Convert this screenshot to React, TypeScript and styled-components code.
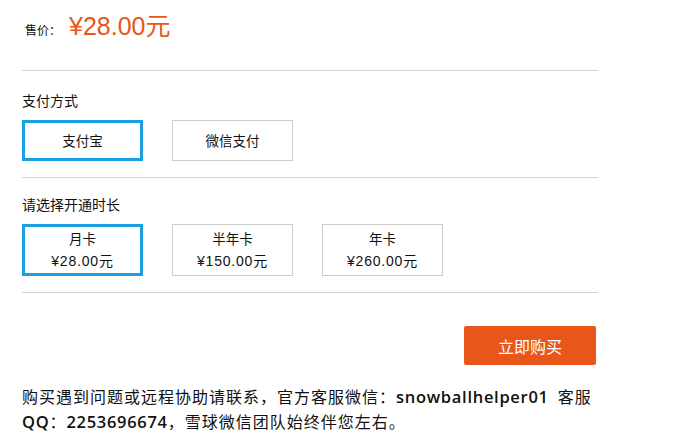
import * as React from "react";
import styled, { createGlobalStyle, css } from "styled-components";

const orange = "#e8561a";
const blue = "#1a9fe0";
const line = "#d4d4d4";

const Global = createGlobalStyle`
  html, body {
    margin: 0;
    padding: 0;
    background: #fff;
  }
  body {
    font-family: "Noto Sans CJK SC", "Liberation Sans", sans-serif;
    color: #111;
  }
`;

const Page = styled.div`
  width: 576px;
  padding: 0 0 0 22px;
`;

const PriceRow = styled.div`
  display: flex;
  align-items: baseline;
  padding: 6px 0 0 3px;
  height: 70px;
  box-sizing: border-box;
`;

const PriceLabel = styled.span`
  font-size: 12px;
`;

const PriceValue = styled.span`
  font-family: "Liberation Sans", "Noto Sans CJK SC", sans-serif;
  font-size: 25px;
  color: ${orange};
  margin-left: 8px;
`;

const Divider = styled.div`
  height: 1px;
  background: ${line};
`;

const Section = styled.div<{ top: number }>`
  padding: ${(p) => p.top}px 0 16px;
`;

const Title = styled.div`
  font-size: 14px;
  line-height: 20px;
  margin-bottom: 10px;
`;

const Options = styled.div`
  display: flex;
`;

const Option = styled.div<{ active?: boolean; tall?: boolean }>`
  box-sizing: border-box;
  width: 121px;
  height: ${(p) => (p.tall ? 52 : 41)}px;
  margin-right: 29px;
  border: 1px solid #cccccc;
  display: flex;
  flex-direction: column;
  align-items: center;
  justify-content: center;
  font-size: 13.5px;
  line-height: 23px;
  background: #fff;
  ${(p) =>
    p.active &&
    css`
      border: 3px solid ${blue};
    `}
`;

const Amount = styled.span`
  font-family: "Liberation Sans", "Noto Sans CJK SC", sans-serif;
  font-size: 14px;
  letter-spacing: 0.8px;
`;

const Actions = styled.div`
  display: flex;
  justify-content: flex-end;
  padding: 33px 2px 0 0;
`;

const BuyButton = styled.button`
  width: 132px;
  height: 39px;
  border: none;
  border-radius: 2px;
  background: ${orange};
  color: #fff;
  font-family: "Noto Sans CJK SC", sans-serif;
  font-size: 16px;
  cursor: pointer;
`;

const Notice = styled.p`
  margin: 19px 0 0;
  font-size: 16px;
  line-height: 24px;
  letter-spacing: 1px;
  color: #111;
`;

const Latin = styled.span`
  font-family: "Open Sans", "Noto Sans CJK SC", sans-serif;
  font-weight: 600;
  font-size: 16.5px;
  letter-spacing: 0.7px;
`;

const durations = [
  { name: "月卡", price: "¥28.00元" },
  { name: "半年卡", price: "¥150.00元" },
  { name: "年卡", price: "¥260.00元" },
];

export default function App() {
  const [pay, setPay] = React.useState(0);
  const [plan, setPlan] = React.useState(0);

  return (
    <Page>
      <Global />
      <PriceRow>
        <PriceLabel>售价：</PriceLabel>
        <PriceValue>¥28.00元</PriceValue>
      </PriceRow>
      <Divider />
      <Section top={19}>
        <Title>支付方式</Title>
        <Options>
          {["支付宝", "微信支付"].map((name, i) => (
            <Option key={name} active={pay === i} onClick={() => setPay(i)}>
              {name}
            </Option>
          ))}
        </Options>
      </Section>
      <Divider />
      <Section top={16}>
        <Title>请选择开通时长</Title>
        <Options>
          {durations.map((d, i) => (
            <Option key={d.name} tall active={plan === i} onClick={() => setPlan(i)}>
              <span>{d.name}</span>
              <Amount>{d.price}</Amount>
            </Option>
          ))}
        </Options>
      </Section>
      <Divider />
      <Actions>
        <BuyButton>立即购买</BuyButton>
      </Actions>
      <Notice>
        购买遇到问题或远程协助请联系，官方客服微信：<Latin>snowballhelper01</Latin>
        {"\u00a0\u00a0"}客服
        <br />
        <Latin>QQ</Latin>：<Latin>2253696674</Latin>，雪球微信团队始终伴您左右。
      </Notice>
    </Page>
  );
}
